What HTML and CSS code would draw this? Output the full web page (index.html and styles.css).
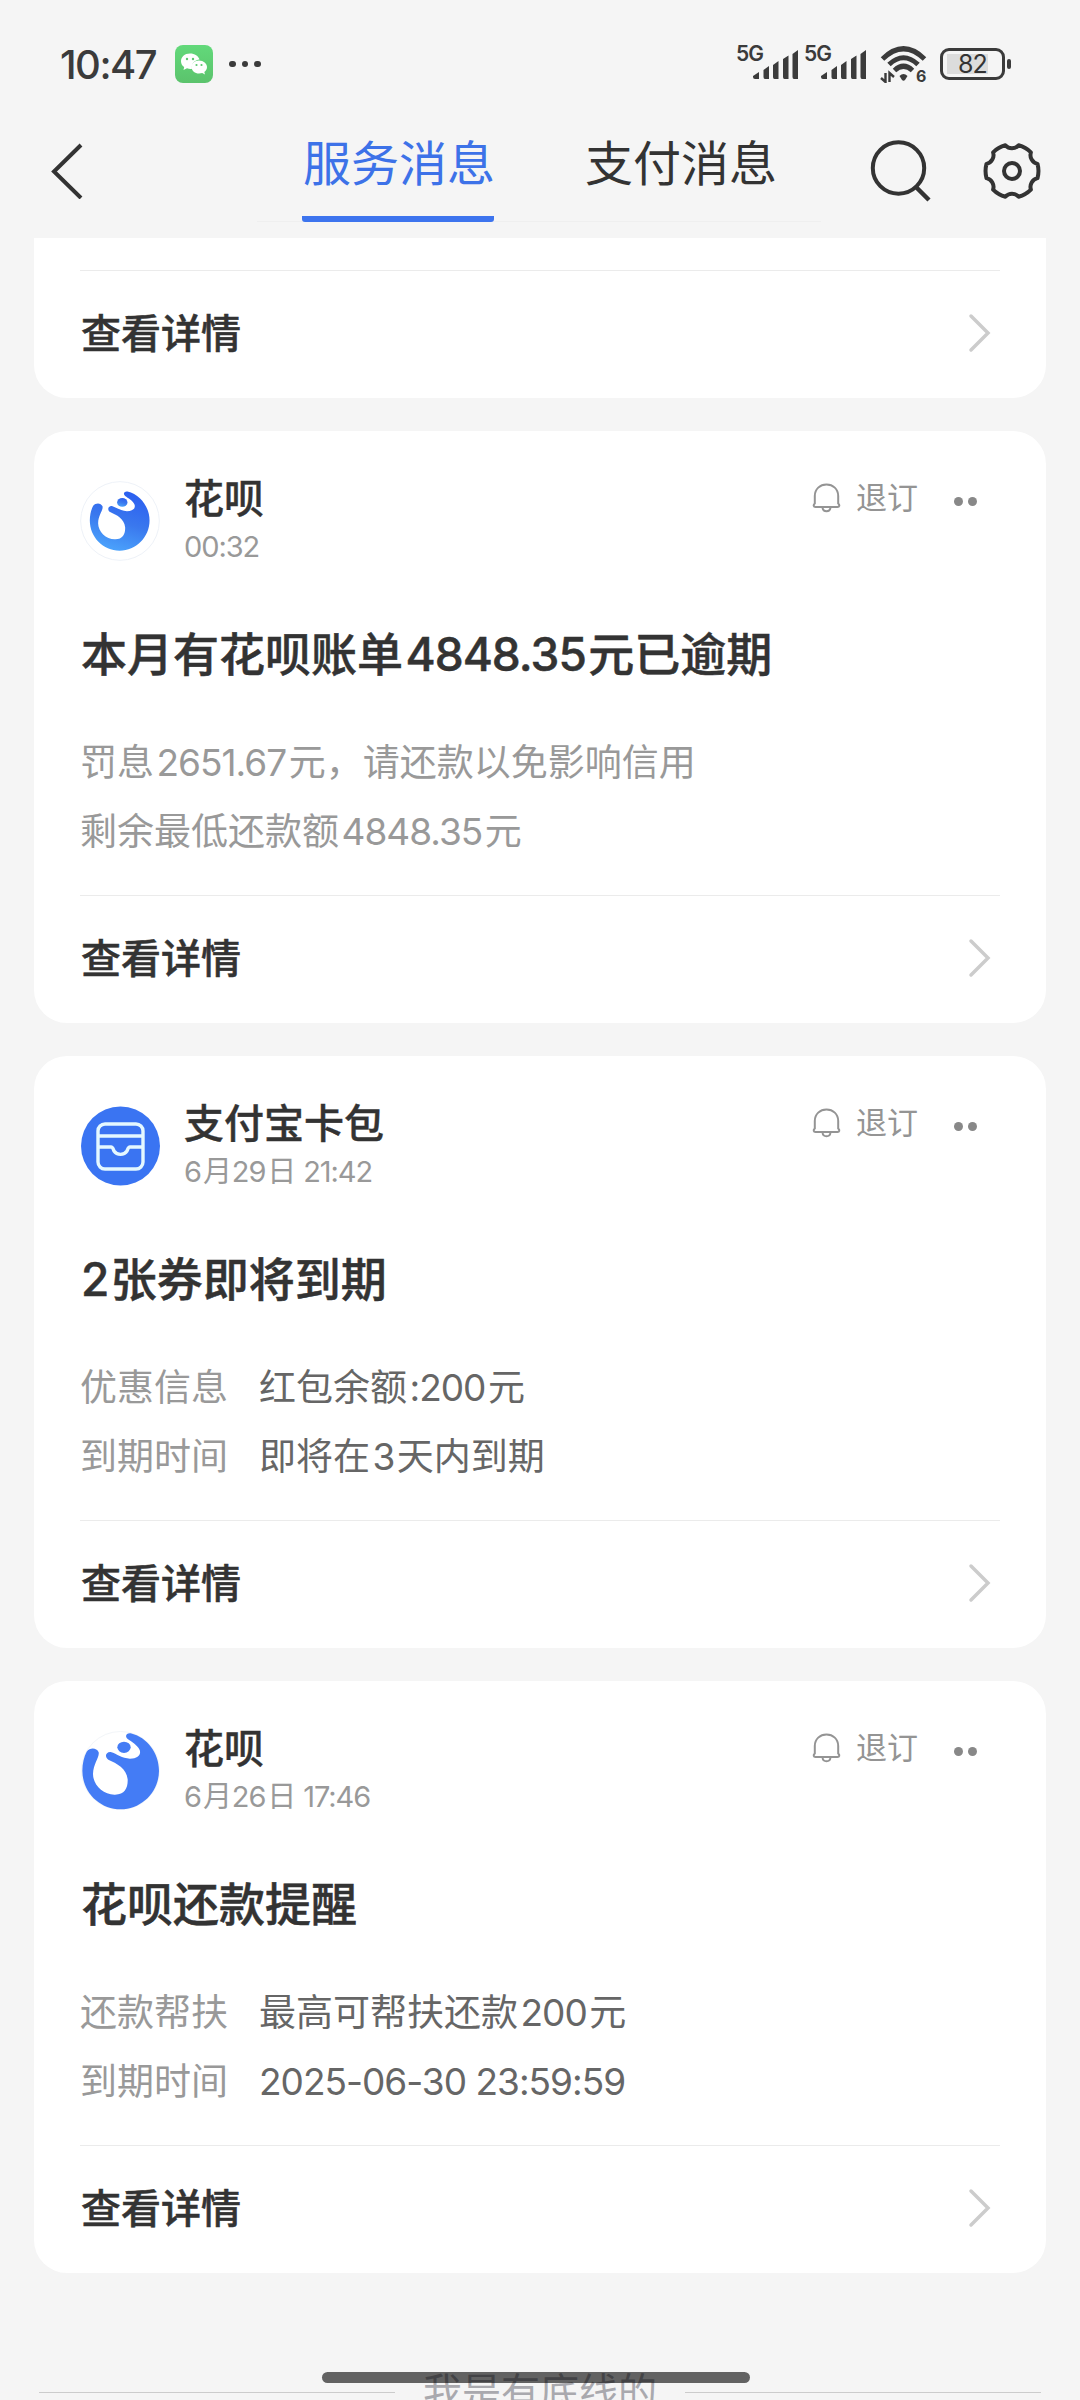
FILE: index.html
```html
<!DOCTYPE html>
<html lang="zh-CN">
<head>
  <meta charset="UTF-8">
  <meta name="viewport" content="width=device-width, initial-scale=1.0">
  <title>服务消息</title>
  <link rel="stylesheet" href="styles.css">
</head>
<body>
  <!-- shared icons -->
  <svg class="defs" width="0" height="0">
    <defs>
      <linearGradient id="blueFade" x1="0.8" y1="0" x2="0.5" y2="1">
        <stop offset="0" stop-color="#2a5df0"/>
        <stop offset="0.55" stop-color="#3a78ee"/>
        <stop offset="1" stop-color="#4aa0fb"/>
      </linearGradient>
      <linearGradient id="greenFade" x1="0" y1="0" x2="0" y2="1">
        <stop offset="0" stop-color="#62d97a"/>
        <stop offset="1" stop-color="#5bc36c"/>
      </linearGradient>
      <symbol id="huabei" viewBox="60 93 240 240">
        <path d="M80 155C90 142 110 143 116 157C119 172 100 190 99 222C99 255 130 285 165 284C195 284 204 262 203 238C200 205 170 190 145 179C133 171 137 155 152 156C172 162 185 175 210 176C234 176 244 163 239 150C232 134 214 125 203 117C193 108 200 98 212 100C262 112 297 160 297 212C297 276 245 328 182 328C118 328 67 276 67 212C67 190 72 170 80 155Z"/>
        <ellipse cx="192" cy="142" rx="20" ry="17"/>
      </symbol>
      <symbol id="bell" viewBox="0 0 30 30">
        <path d="M3.500 24C1.500 24 1 22 2.800 20.500V13C2.800 6 8 1.500 14.500 1.500S26.200 6 26.200 13V20.500C28 22 27.500 24 25.500 24ZM10.500 24.500C11 29.500 18 29.500 18.500 24.500" fill="none" stroke="#949494" stroke-width="2"/>
      </symbol>
      <symbol id="arrow" viewBox="0 0 24 40">
        <path d="M3 3L20 20L3 37" fill="none" stroke="#ccc" stroke-width="3.500" stroke-linecap="round"/>
      </symbol>
      <symbol id="signal" viewBox="0 0 46 30">
        <path d="M0 26L6 22V29H2Q0 29 0 27ZM10.500 20L16 16V29H12Q10.500 29 10.500 27ZM20 15L25.500 11V29H21.500Q20 29 20 27ZM30 9L35.500 5.500V29H31.500Q30 29 30 27ZM39.500 4L45 0V29H41Q39.500 29 39.500 27Z" fill="#3b3b3b"/>
      </symbol>
    </defs>
  </svg>

  <header class="top">
    <div class="status">
      <span class="clock">10:47</span>
      <svg class="wechat" viewBox="0 0 38 38">
        <rect width="38" height="38" rx="8" fill="url(#greenFade)"/>
        <path d="M15 8.500C9.500 8.500 6 12 6 16.200C6 18.800 7.300 20.700 9.200 22L8.500 25L12 23.300C14 24 16 24 17 23.700C16 18 21 14.500 24.500 14.600C23.500 11 19.700 8.500 15 8.500Z" fill="#fff"/>
        <path d="M24 15.500C19.500 15.500 16.500 18.500 16.500 22C16.500 25.800 20 28.500 24 28.500C25.200 28.500 26.300 28.300 27.200 28L30 29.500L29.300 26.900C31 25.700 32 24 32 22C32 18.500 28.500 15.500 24 15.500Z" fill="#fff"/>
        <g fill="#5cc96f"><circle cx="12" cy="14" r="1.200"/><circle cx="18" cy="14" r="1.200"/><circle cx="21.500" cy="20" r="1.100"/><circle cx="26.500" cy="20" r="1.100"/></g>
      </svg>
      <span class="notice"><i></i><i></i><i></i></span>
      <div class="network">
        <span class="gen">5G</span><svg class="bars"><use href="#signal"/></svg>
        <span class="gen">5G</span><svg class="bars"><use href="#signal"/></svg>
        <svg class="wifi" viewBox="0 0 48 38">
          <g fill="none" stroke="#3b3b3b" stroke-width="5">
            <path d="M2.500 14Q23.500 -6.500 44.500 14"/>
            <path d="M9 19.500Q23.500 6 38 19.500"/>
            <path d="M14.500 25.500Q23.500 17 32.500 25.500"/>
          </g>
          <path d="M19.500 31Q23.500 27 27.500 31L25 35Q23.500 36.500 22 35Z" fill="#3b3b3b"/>
          <path d="M5.500 28V37L1 33M9.500 37V28L14 32" fill="none" stroke="#3b3b3b" stroke-width="2.400"/>
          <text x="36" y="37" class="wifi-gen">6</text>
        </svg>
        <span class="battery"><b>82</b></span><span class="nub"></span>
      </div>
    </div>

    <nav class="nav">
      <svg class="back" viewBox="0 0 34 56"><path d="M31 2L4 28.500L31 55" fill="none" stroke="#333" stroke-width="4"/></svg>
      <div class="tabs">
        <a class="tab active">服务消息</a>
        <a class="tab">支付消息</a>
      </div>
      <svg class="search" viewBox="0 0 62 64"><circle cx="29.500" cy="28" r="25.700" fill="none" stroke="#333" stroke-width="4"/><path d="M46 46L60 60" stroke="#333" stroke-width="4.500"/></svg>
      <svg class="gear" viewBox="-29 -29 58 58">
        <path d="M25.500 -7.100A27 27 0 0 1 25.500 7.100A9 9 0 0 0 18.900 18.600A27 27 0 0 1 6.600 25.700A9 9 0 0 0 -6.600 25.700A27 27 0 0 1 -18.900 18.600A9 9 0 0 0 -25.500 7.100A27 27 0 0 1 -25.500 -7.100A9 9 0 0 0 -18.900 -18.600A27 27 0 0 1 -6.600 -25.700A9 9 0 0 0 6.600 -25.700A27 27 0 0 1 18.900 -18.600A9 9 0 0 0 25.500 -7.100Z" fill="none" stroke="#333" stroke-width="4" stroke-linejoin="round"/>
        <circle r="8" fill="none" stroke="#333" stroke-width="4"/>
      </svg>
    </nav>
  </header>

  <main class="list">
    <section class="card cut">
      <a class="detail">查看详情<svg class="arrow"><use href="#arrow"/></svg></a>
    </section>

    <section class="card">
      <div class="head">
        <svg class="avatar" viewBox="60 62 240 240">
          <circle cx="180" cy="182" r="118" fill="#fff" stroke="#eef2f8" stroke-width="3"/>
          <use href="#huabei" x="84" y="88" width="187" height="187" fill="url(#blueFade)"/>
        </svg>
        <div class="who">
          <h2>花呗</h2>
          <time>00:32</time>
        </div>
        <div class="actions"><svg class="bell"><use href="#bell"/></svg><span class="unsub">退订</span><span class="more"><i></i><i></i></span></div>
      </div>
      <h3 class="title">本月有花呗账单<span class="num">4848.35</span>元已逾期</h3>
      <div class="body">
        <p class="gray">罚息<span class="num">2651.67</span>元，请还款以免影响信用</p>
        <p class="gray">剩余最低还款额<span class="num">4848.35</span>元</p>
      </div>
      <a class="detail">查看详情<svg class="arrow"><use href="#arrow"/></svg></a>
    </section>

    <section class="card">
      <div class="head">
        <svg class="avatar" viewBox="0 0 80 80">
          <circle cx="40.500" cy="40" r="39.500" fill="#3a74f2"/>
          <g fill="none" stroke="#e4f8ff" stroke-width="3.400">
            <rect x="18" y="18" width="45" height="45" rx="7"/>
            <path d="M18 30H63M18 41H31C33 41 33 43 34 45C37 49.500 44 49.500 47 45C48 43 48 41 50 41H63"/>
          </g>
        </svg>
        <div class="who">
          <h2>支付宝卡包</h2>
          <time>6<em>月</em>29<em>日</em> 21:42</time>
        </div>
        <div class="actions"><svg class="bell"><use href="#bell"/></svg><span class="unsub">退订</span><span class="more"><i></i><i></i></span></div>
      </div>
      <h3 class="title"><span class="num first">2</span>张券即将到期</h3>
      <div class="body">
        <p><label>优惠信息</label>红包余额<span class="num">:200</span>元</p>
        <p><label>到期时间</label>即将在<span class="num">3</span>天内到期</p>
      </div>
      <a class="detail">查看详情<svg class="arrow"><use href="#arrow"/></svg></a>
    </section>

    <section class="card">
      <div class="head">
        <svg class="avatar" fill="#447cf5" viewBox="0 0 80 80">
          <circle cx="40.500" cy="39.500" r="39" fill="#fff" stroke="#f2f5f8"/>
          <use href="#huabei" width="80" height="80"/>
        </svg>
        <div class="who">
          <h2>花呗</h2>
          <time>6<em>月</em>26<em>日</em> 17:46</time>
        </div>
        <div class="actions"><svg class="bell"><use href="#bell"/></svg><span class="unsub">退订</span><span class="more"><i></i><i></i></span></div>
      </div>
      <h3 class="title">花呗还款提醒</h3>
      <div class="body">
        <p><label>还款帮扶</label>最高可帮扶还款<span class="num">200</span>元</p>
        <p><label>到期时间</label><span class="num first">2025-06-30 23:59:59</span></p>
      </div>
      <a class="detail">查看详情<svg class="arrow"><use href="#arrow"/></svg></a>
    </section>
  </main>

  <footer class="end">我是有底线的</footer>
  <div class="home-bar"></div>
</body>
</html>
```
FILE: styles.css
```css
* {
  box-sizing: border-box;
  margin: 0;
  padding: 0;
}

body {
  width: 1080px;
  height: 2400px;
  overflow: hidden;
  position: relative;
  background: #f5f5f5;
  color: #333;
  font-family: Inter, "Noto Sans CJK SC", sans-serif;
}

svg {
  display: block;
  flex: none;
}

.defs {
  position: absolute;
}

/* status bar */
.top {
  height: 238px;
}

.status {
  display: flex;
  height: 128px;
  padding: 0 69px 0 60px;
  align-items: center;
}

.clock {
  width: 115px;
  font-size: 40px;
  font-weight: 500;
  letter-spacing: -1.5px;
  color: #3b3b3b;
}

.wechat {
  width: 38px;
  height: 38px;
}

.notice {
  display: flex;
  gap: 6px;
  margin-left: 16px;
}

.notice i {
  width: 6.500px;
  height: 6.500px;
  border-radius: 50%;
  background: #3b3b3b;
}

.network {
  display: flex;
  align-items: center;
  margin-left: auto;
}

.gen {
  width: 17px;
  margin-top: -21px;
  font-size: 21px;
  font-weight: 600;
  letter-spacing: -1px;
  color: #3b3b3b;
}

.bars {
  width: 46px;
  height: 30px;
  margin: 2px 5px 0 0;
}

.wifi {
  width: 48px;
  height: 38px;
  margin: 0 12px 0 8px;
}

.wifi-gen {
  font-size: 16px;
  font-weight: 700;
  fill: #3b3b3b;
}

.battery {
  width: 65px;
  height: 32px;
  border: 3px solid #3b3b3b;
  border-radius: 9px;
  padding: 2px 4px;
  background: linear-gradient(#dcdcdc, #dcdcdc) 4px 3px / 41px 20px no-repeat;
}

.battery b {
  display: block;
  text-align: center;
  font-size: 25px;
  line-height: 22px;
  font-weight: 400;
  letter-spacing: -0.8px;
}

.nub {
  width: 4px;
  height: 10px;
  margin-left: 2px;
  border-radius: 2px;
  background: #3b3b3b;
}

/* title bar */
.nav {
  display: flex;
  height: 110px;
  padding-left: 50px;
}

.back {
  width: 34px;
  height: 56px;
  margin-top: 15px;
}

.tabs {
  display: flex;
  gap: 90px;
  height: 94px;
  margin-left: 173px;
  padding: 0 45px;
  border-bottom: 1px solid #efefef;
}

.tab {
  width: 192px;
  height: 94px;
  padding-left: 1px;
  white-space: nowrap;
  font-size: 48px;
  line-height: 71px;
}

.active {
  color: #3d72e8;
  border-bottom: 6px solid #3d74ee;
  border-radius: 3px;
}

.search {
  width: 62px;
  height: 64px;
  margin: 12px 0 0 48px;
}

.gear {
  width: 58px;
  height: 58px;
  margin: 14px 0 0 52px;
}

/* message cards */
.list {
  display: flex;
  flex-direction: column;
  gap: 33px;
  padding: 0 34px;
}

.card {
  height: 592px;
  padding: 43px 46px 0;
  background: #fff;
  border-radius: 33px;
}

.cut {
  height: 160px;
  padding-top: 32px;
  border-radius: 0 0 33px 33px;
}

.head {
  display: flex;
  height: 90px;
}

.avatar {
  width: 80px;
  height: 80px;
  margin-top: 7px;
}

.who {
  margin-left: 24px;
}

.who h2 {
  font-size: 40px;
  line-height: 50px;
  font-weight: 500;
  -webkit-text-stroke: 0.4px;
}

.who time {
  display: block;
  margin-top: 5px;
  font-size: 29px;
  line-height: 36px;
  letter-spacing: -1.1px;
  color: #999;
}

.who em {
  font-style: normal;
  margin: 0 1px 0 2px;
}

.actions {
  display: flex;
  height: 48px;
  align-items: center;
  margin-left: auto;
  margin-right: 23px;
  font-size: 31px;
  color: #949494;
}

.bell {
  width: 30px;
  height: 30px;
  margin-right: 14px;
}

.unsub {
  height: 48px;
  line-height: 48px;
}

.more {
  display: flex;
  gap: 5px;
  margin: 6px 0 0 36px;
}

.more i {
  width: 9px;
  height: 9px;
  border-radius: 50%;
  background: #888;
}

.title {
  margin-top: 60px;
  padding-left: 1px;
  font-size: 46px;
  line-height: 60px;
  font-weight: 500;
  -webkit-text-stroke: 0.5px;
}

.num {
  margin: 0 2.500px;
  letter-spacing: -1px;
}

.first {
  margin-left: 0;
}

.body {
  height: 167px;
  margin-top: 44px;
  font-size: 37px;
  line-height: 69px;
  color: #666;
}

.body .gray,
.body label {
  color: #999;
}

.body label {
  display: inline-block;
  width: 179px;
}

.detail {
  display: flex;
  height: 125px;
  justify-content: space-between;
  align-items: center;
  padding: 0 8px 0 1px;
  border-top: 1px solid #ebebeb;
  font-size: 40px;
  line-height: 123px;
  font-weight: 500;
  -webkit-text-stroke: 0.5px;
}

.arrow {
  width: 24px;
  height: 40px;
}

/* end of the list */
.end {
  display: flex;
  gap: 28px;
  align-items: center;
  height: 40px;
  margin: 99px 39px 0;
  font-size: 39px;
  line-height: 42px;
  color: #a9a9ae;
}

.end::before,
.end::after {
  content: "";
  flex: 1;
  height: 1px;
  background: #ccc;
}

.home-bar {
  position: absolute;
  left: 322px;
  top: 2372px;
  width: 428px;
  height: 11px;
  border-radius: 6px;
  background: rgba(0, 0, 0, 0.6);
}
```
